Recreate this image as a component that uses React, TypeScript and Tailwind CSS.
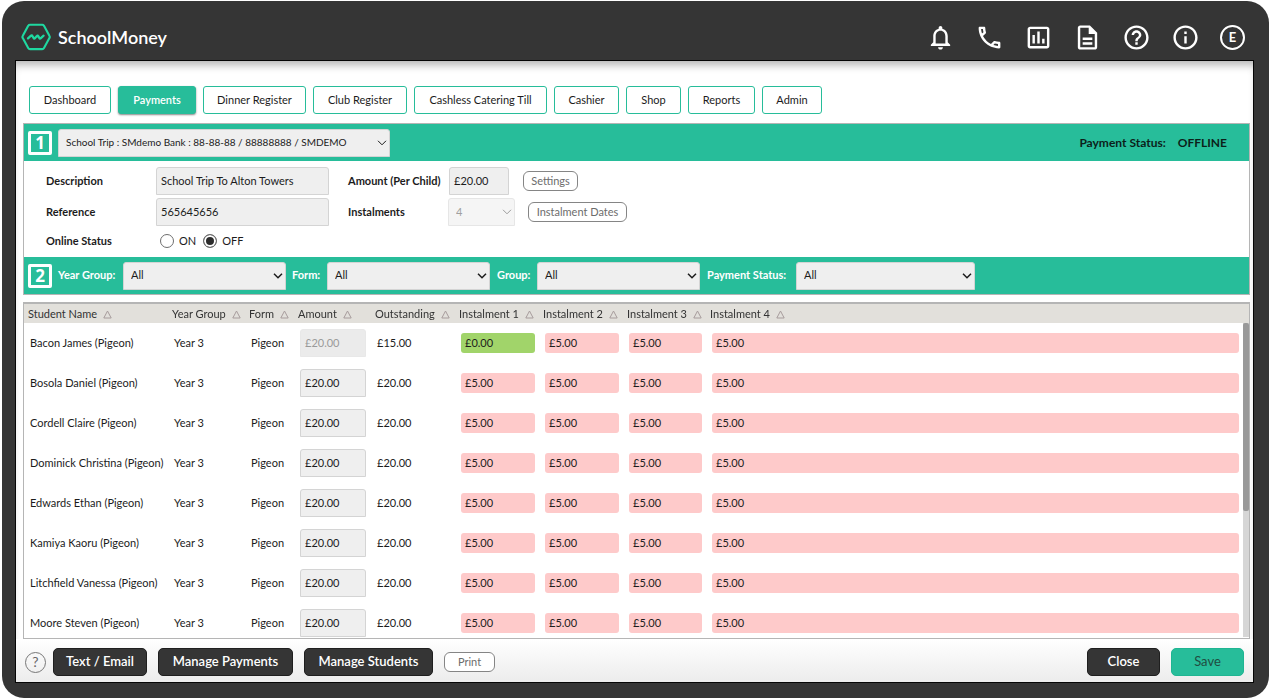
import type { ReactNode } from "react";
import {
  MdHelpOutline,
  MdInfoOutline,
  MdNotificationsNone,
  MdOutlineAssessment,
  MdOutlineDescription,
  MdOutlineLocalPhone,
} from "react-icons/md";

const NAV = [
  { label: "Dashboard", width: "w-[82px]" },
  { label: "Payments", width: "w-[78px]", active: true },
  { label: "Dinner Register", width: "w-[103px]" },
  { label: "Club Register", width: "w-[94px]" },
  { label: "Cashless Catering Till", width: "w-[133px]" },
  { label: "Cashier", width: "w-[65px]" },
  { label: "Shop", width: "w-[55px]" },
  { label: "Reports", width: "w-[67px]" },
  { label: "Admin", width: "w-[60px]" },
];

const COLUMNS = [
  { label: "Student Name", width: "w-[144px]" },
  { label: "Year Group", width: "w-[77px]" },
  { label: "Form", width: "w-[49px]" },
  { label: "Amount", width: "w-[77px]" },
  { label: "Outstanding", width: "w-[84px]" },
  { label: "Instalment 1", width: "w-[84px]" },
  { label: "Instalment 2", width: "w-[84px]" },
  { label: "Instalment 3", width: "w-[83px]" },
  { label: "Instalment 4", width: "w-auto" },
];

const DUE = ["£5.00", "£5.00", "£5.00", "£5.00"];

const STUDENTS = [
  { name: "Bacon James", outstanding: "£15.00", instalments: ["£0.00", "£5.00", "£5.00", "£5.00"], locked: true },
  { name: "Bosola Daniel", outstanding: "£20.00", instalments: DUE },
  { name: "Cordell Claire", outstanding: "£20.00", instalments: DUE },
  { name: "Dominick Christina", outstanding: "£20.00", instalments: DUE },
  { name: "Edwards Ethan", outstanding: "£20.00", instalments: DUE },
  { name: "Kamiya Kaoru", outstanding: "£20.00", instalments: DUE },
  { name: "Litchfield Vanessa", outstanding: "£20.00", instalments: DUE },
  { name: "Moore Steven", outstanding: "£20.00", instalments: DUE },
];

const TOOLS = [
  { label: "Notifications", Icon: MdNotificationsNone },
  { label: "Phone", Icon: MdOutlineLocalPhone },
  { label: "Statistics", Icon: MdOutlineAssessment },
  { label: "Documents", Icon: MdOutlineDescription },
  { label: "Help", Icon: MdHelpOutline },
  { label: "Information", Icon: MdInfoOutline },
];

function Logo() {
  return (
    <svg viewBox="0 0 30 28" className="h-7 w-[30px]" fill="none" stroke="#1fd8a0" strokeLinejoin="round" strokeLinecap="round" aria-hidden="true">
      <path d="M9 1.8h12.2c.8 0 1.4.4 1.8 1l5.4 9.9c.5.8.5 1.6 0 2.4l-5.4 9.9c-.4.7-1 1.1-1.8 1.1H9c-.8 0-1.4-.4-1.8-1.1l-5.4-9.9c-.5-.8-.5-1.6 0-2.4l5.4-9.9c.4-.6 1-1 1.8-1z" strokeWidth="2.1" />
      <path d="M7 15.4l3-2.7c.5-.4 1-.3 1.3.2l1.4 2.2c.3.5.8.6 1.2.1l2-2.3c.4-.5 1-.4 1.3.1l1.2 2.1c.3.5.8.6 1.2.2l3-2.6" strokeWidth="2.3" />
    </svg>
  );
}

function Chevron({ className }: { className: string }) {
  return (
    <svg viewBox="0 0 10 6" className={`pointer-events-none absolute top-1/2 h-[6px] w-[10px] -translate-y-1/2 ${className}`} fill="none" stroke="currentColor" aria-hidden="true">
      <path d="M1 .8l4 4 4-4" />
    </svg>
  );
}

function Select({ id, value, className, chevron, disabled, label }: { id: string; value: string; className: string; chevron: string; disabled?: boolean; label?: string }) {
  return (
    <div className={`relative h-7 shrink-0 ${className}`}>
      <select id={id} aria-label={label} defaultValue={value} disabled={disabled} className="h-full w-full appearance-none rounded-t-[3px] border border-[#d4d4d4] bg-[#efefef] px-[7px] disabled:border-[#e6e6e6] disabled:bg-[#f5f5f5] disabled:text-[#a0a0a0]">
        <option>{value}</option>
      </select>
      <Chevron className={chevron} />
    </div>
  );
}

function StepNumber({ children }: { children: ReactNode }) {
  return (
    <span className="mr-[6px] flex size-6 shrink-0 items-center justify-center rounded-[2px] border-[3px] border-white font-['Open_Sans',sans-serif] text-[17px] leading-none font-bold text-white">
      {children}
    </span>
  );
}

const field = "h-7 rounded-t-[3px] border border-[#d4d4d4] bg-[#efefef] px-1 pb-[2px] disabled:border-[#e8e8e8] disabled:bg-[#ebebeb] disabled:text-[#9a9a9a]";
const pill = "h-5 rounded-[6px] border border-[#858585] bg-white text-[#6c6c6c]";
const darkButton = "h-7 rounded-[5px] border border-[#1f1f1f] bg-[#353535] text-[13px] font-semibold text-white";
const radio = "size-[14px] appearance-none rounded-full border border-[#6e6e6e] checked:bg-[#2c2c2c] checked:shadow-[inset_0_0_0_2px_white]";

export default function App() {
  return (
    <div className="h-screen bg-white px-[2px] pt-px pb-[2px] font-['Lato',sans-serif] text-[11px] text-[#1c1c1c]">
      <div className="flex h-full flex-col rounded-[22px] bg-[#353535] pr-4 pb-4 pl-[14px]">
        <header className="flex h-[60px] shrink-0 items-center justify-between pt-3 pr-2 pl-[5px] text-white">
          <div className="flex items-center gap-[7px]">
            <Logo />
            <span className="text-[18px] font-semibold">SchoolMoney</span>
          </div>
          <div className="flex items-center gap-5">
            {TOOLS.map(({ label, Icon }) => (
              <button key={label} aria-label={label}>
                <Icon className="size-[29px]" />
              </button>
            ))}
            <button className="flex size-[25px] items-center justify-center rounded-full border-2 border-white text-[13px] leading-none font-bold">E</button>
          </div>
        </header>

        <main className="flex min-h-0 flex-1 flex-col bg-white pr-[3px] pl-[7px] shadow-[0_0_0_1px_#050505,inset_0_8px_8px_-4px_#b5b5b5]">
          <nav className="mt-[25px] flex items-center gap-[7px] pl-[6px]">
            {NAV.map(({ label, width, active }) => (
              <a
                key={label}
                href="#"
                className={`flex h-7 shrink-0 items-center justify-center rounded-[3px] border border-[#27bd9a] ${width} ${active ? "bg-[#27bd9a] font-semibold text-white shadow-[0_1px_2px_#888]" : ""}`}
              >
                {label}
              </a>
            ))}
          </nav>

          <section className="mt-[9px] border border-[#b5b5b5]">
            <div className="flex h-[37px] items-center bg-[#27bd9a] pl-1">
              <StepNumber>1</StepNumber>
              <Select id="trip" label="Payment" value="School Trip : SMdemo Bank : 88-88-88 / 88888888 / SMDEMO" className="w-[332px] text-[10px]" chevron="right-[3px]" />
              <p className="mr-[22px] ml-auto flex gap-3 text-[12px] font-bold text-[#0c1f1a]">
                <span>Payment Status:</span>
                <span>OFFLINE</span>
              </p>
            </div>

            <div className="flex flex-col gap-[3px] pt-[6px] pb-1 pl-[22px]">
              <div className="flex h-7 items-center">
                <label htmlFor="description" className="w-[110px] font-bold">Description</label>
                <input id="description" defaultValue="School Trip To Alton Towers" className={`w-[173px] ${field}`} />
                <label htmlFor="amount" className="ml-[19px] w-[101px] font-bold">Amount (Per Child)</label>
                <input id="amount" defaultValue="£20.00" className={`w-[60px] ${field}`} />
                <button className={`ml-[14px] w-[55px] ${pill}`}>Settings</button>
              </div>
              <div className="flex h-7 items-center">
                <label htmlFor="reference" className="w-[110px] font-bold">Reference</label>
                <input id="reference" defaultValue="565645656" className={`w-[173px] ${field}`} />
                <label htmlFor="instalments" className="ml-[19px] w-[100px] font-bold">Instalments</label>
                <Select id="instalments" value="4" disabled className="w-[67px]" chevron="right-[3px] text-[#9c9c9c]" />
                <button className={`ml-[13px] w-[99px] ${pill}`}>Instalment Dates</button>
              </div>
              <div role="radiogroup" aria-labelledby="online-status" className="flex h-6 items-center">
                <span id="online-status" className="w-[114px] font-bold">Online Status</span>
                <label className="flex items-center gap-[5px]">
                  <input type="radio" name="online" className={radio} />
                  ON
                </label>
                <label className="ml-[7px] flex items-center gap-[5px]">
                  <input type="radio" name="online" defaultChecked className={radio} />
                  OFF
                </label>
              </div>
            </div>

            <div className="flex h-[37px] items-center bg-[#27bd9a] pl-1 font-bold text-white">
              <StepNumber>2</StepNumber>
              <label htmlFor="year" className="w-[65px] shrink-0">Year Group:</label>
              <Select id="year" value="All" className="w-[163px] font-normal text-[#1c1c1c]" chevron="right-[3px] [stroke-width:1.5]" />
              <label htmlFor="form" className="ml-[6px] w-[35px] shrink-0">Form:</label>
              <Select id="form" value="All" className="w-[163px] font-normal text-[#1c1c1c]" chevron="right-[3px] [stroke-width:1.5]" />
              <label htmlFor="group" className="ml-[7px] w-10 shrink-0">Group:</label>
              <Select id="group" value="All" className="w-[163px] font-normal text-[#1c1c1c]" chevron="right-[3px] [stroke-width:1.5]" />
              <label htmlFor="status" className="ml-[7px] w-[89px] shrink-0">Payment Status:</label>
              <Select id="status" value="All" className="w-[179px] font-normal text-[#1c1c1c]" chevron="right-[3px] [stroke-width:1.5]" />
            </div>
          </section>

          <section className="relative mt-[7px] flex min-h-0 flex-1 flex-col border border-t-2 border-[#b5b5b5]">
            <div className="min-h-0 flex-1 overflow-y-auto [scrollbar-width:none]">
              <table className="w-full table-fixed">
                <thead className="sticky top-0 z-10 bg-[#e2e0db]">
                  <tr className="h-[19px]">
                    {COLUMNS.map(({ label, width }) => (
                      <th key={label} className={`pl-1 text-left leading-[19px] font-normal whitespace-nowrap text-[#333] ${width}`}>
                        {label}
                        <svg viewBox="0 0 9 9" className="ml-[6px] inline size-[9px] align-[-1px]" fill="none" stroke="#a79c9c" aria-hidden="true">
                          <path d="M4.5 1L8.2 8H.8z" />
                        </svg>
                      </th>
                    ))}
                  </tr>
                </thead>
                <tbody>
                  {STUDENTS.map((s) => (
                    <tr key={s.name} className="h-10">
                      <td className="pl-[6px] whitespace-nowrap">{s.name} (Pigeon)</td>
                      <td className="pl-[6px]">Year 3</td>
                      <td className="pl-[6px]">Pigeon</td>
                      <td className="pl-[6px]">
                        <input aria-label={`Amount for ${s.name}`} defaultValue="£20.00" disabled={s.locked} className={`block w-[66px] ${field}`} />
                      </td>
                      <td className="pl-[6px]">{s.outstanding}</td>
                      {s.instalments.map((value, i) => (
                        <td key={i} className="pr-1 pl-[6px] last:pr-[10px]">
                          <div className={`h-5 rounded-[3px] pl-1 leading-5 ${value === "£0.00" ? "bg-[#a1d46a]" : "bg-[#fecaca]"}`}>{value}</div>
                        </td>
                      ))}
                    </tr>
                  ))}
                </tbody>
              </table>
            </div>
            <div className="absolute top-[19px] right-0 bottom-px z-10 w-[6px] bg-[#d6d6d6]" aria-hidden="true">
              <div className="h-3/5 rounded-[2px] bg-[#999]" />
            </div>
          </section>

          <footer className="-mr-[3px] -ml-[7px] flex shrink-0 items-center bg-linear-to-b from-white to-[#ececec] pt-[9px] pr-[9px] pb-[6px] pl-[9px]">
            <button aria-label="Help" className="mr-[7px] flex size-[21px] items-center justify-center rounded-full border border-[#777] text-[14px] leading-none text-[#666]">?</button>
            <button className={`mr-[11px] w-[94px] ${darkButton}`}>Text / Email</button>
            <button className={`mr-[11px] w-[135px] ${darkButton}`}>Manage Payments</button>
            <button className={`mr-[11px] w-[129px] ${darkButton}`}>Manage Students</button>
            <button className={`w-[51px] ${pill}`}>Print</button>
            <button className={`mr-[11px] ml-auto w-[73px] ${darkButton}`}>Close</button>
            <button className="h-7 w-[73px] rounded-[5px] border border-[#1fb592] bg-[#27bd9a] text-[13px] text-[#204d42]">Save</button>
          </footer>
        </main>
      </div>
    </div>
  );
}
